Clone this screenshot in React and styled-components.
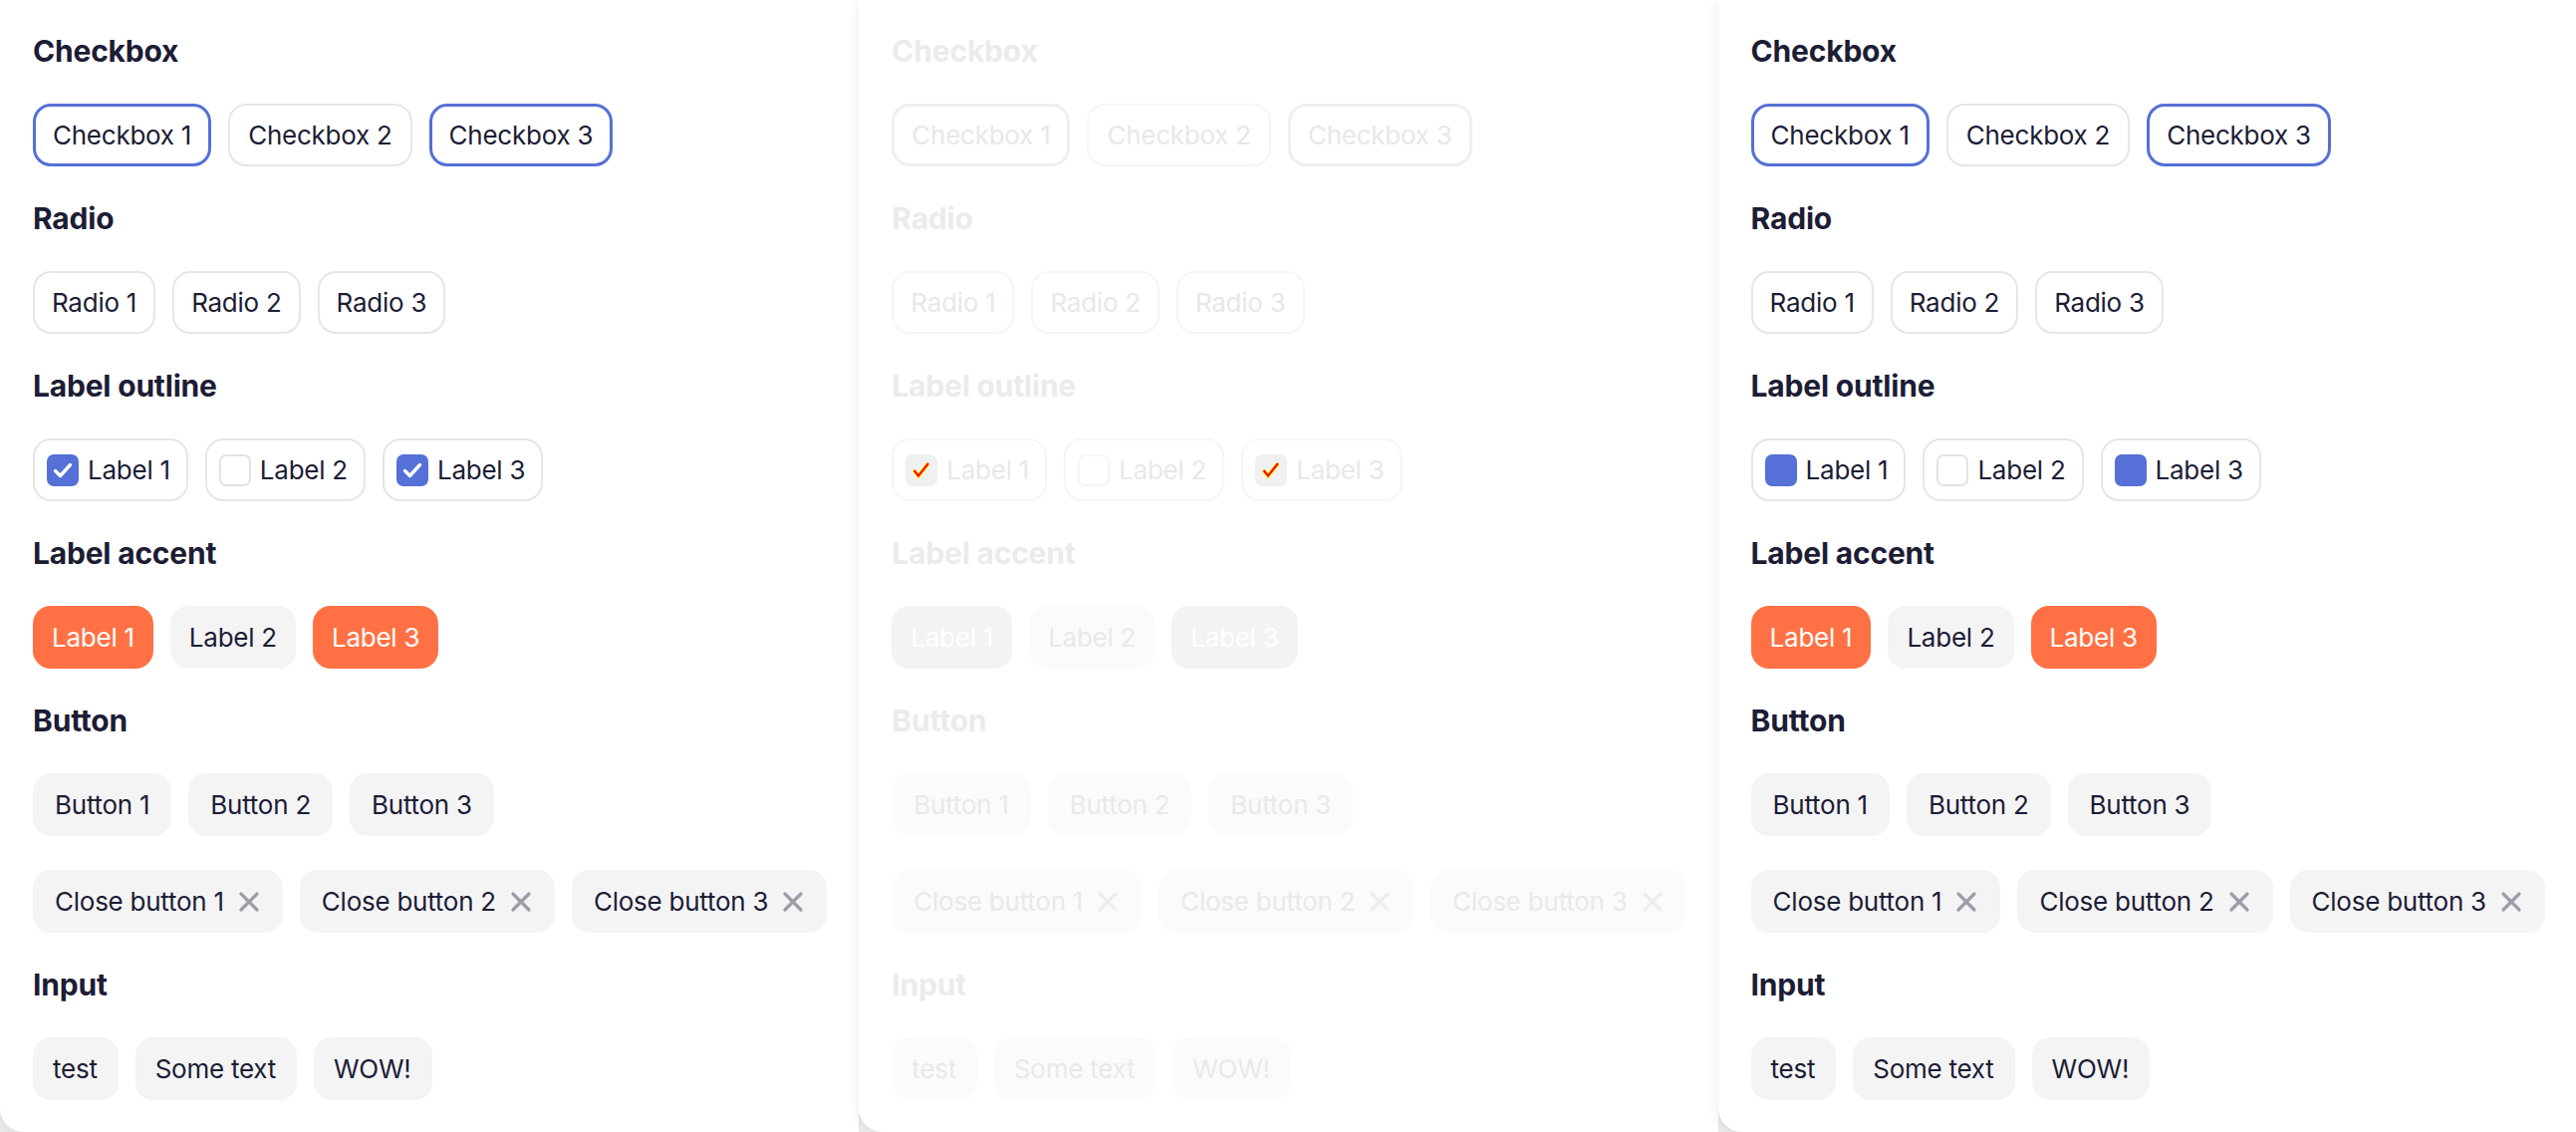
import React from 'react';
import styled, { createGlobalStyle, ThemeProvider } from 'styled-components';

const GlobalStyle = createGlobalStyle`
  html, body {
    margin: 0;
    padding: 0;
    background: #ebebeb;
  }
  body {
    font-family: Inter, "Noto Sans", sans-serif;
  }
`;

const normalTheme = {
  heading: '#1c1d35',
  text: '#1c1d35',
  border: '#e6e6e6',
  selected: '#5570d6',
  accent: '#ff7144',
  accentText: '#ffffff',
  muted: '#f4f4f5',
  mutedText: '#1c1d35',
  icon: '#9d9ca8',
  boxFill: '#5570d6',
  boxBorder: '#e3e3e3',
};

const disabledTheme = {
  heading: '#ebebeb',
  text: '#e8e8e8',
  border: '#f6f6f6',
  selected: '#efefef',
  accent: '#f3f3f3',
  accentText: '#ffffff',
  muted: '#fbfbfb',
  mutedText: '#e9e9e9',
  icon: '#ededed',
  boxFill: '#f0f0f0',
  boxBorder: '#f6f6f6',
};

const Board = styled.div`
  display: flex;
  width: 2586px;
  height: 1136px;
  overflow: hidden;
`;

const Panel = styled.section`
  position: relative;
  flex: 0 0 862px;
  box-sizing: border-box;
  height: 1136px;
  padding: 33px 32px 32px 33px;
  background: #ffffff;
  border-bottom-left-radius: 24px;
  box-shadow: -3px 2px 10px rgba(0, 0, 0, 0.05);
  display: flex;
  flex-direction: column;
  gap: 34px;
`;

const Heading = styled.h2`
  margin: 0;
  font-size: 30px;
  line-height: 37px;
  font-weight: 700;
  letter-spacing: -0.2px;
  color: ${(p) => p.theme.heading};
`;

const Row = styled.div`
  display: flex;
  gap: 17px;
`;

const Chip = styled.span`
  box-sizing: border-box;
  display: inline-flex;
  align-items: center;
  height: 63px;
  padding: 0 18px;
  border: 2px solid transparent;
  border-radius: 18px;
  font-size: 26px;
  line-height: 39px;
  letter-spacing: -0.25px;
  color: ${(p) => p.theme.text};
  white-space: nowrap;
`;

const ToggleChip = styled(Chip)`
  border-color: ${(p) => (p.$selected ? p.theme.selected : p.theme.border)};
  border-width: ${(p) => (p.$selected ? '3px' : '2px')};
  padding: 0 ${(p) => p.$pad - (p.$selected ? 1 : 0)}px;
`;

const OutlineChip = styled(Chip)`
  border-color: ${(p) => p.theme.border};
  padding: 0 16px 0 12px;
  gap: 9px;
`;

const Box = styled.span`
  box-sizing: border-box;
  display: inline-flex;
  align-items: center;
  justify-content: center;
  width: 32px;
  height: 32px;
  border-radius: 7px;
  background: ${(p) => (p.$checked ? p.theme.boxFill : 'transparent')};
  border: 2px solid ${(p) => (p.$checked ? p.theme.boxFill : p.theme.boxBorder)};
`;

const AccentChip = styled(Chip)`
  padding: 0 17px;
  background: ${(p) => (p.$active ? p.theme.accent : p.theme.muted)};
  color: ${(p) => (p.$active ? p.theme.accentText : p.theme.mutedText)};
`;

const PlainButton = styled(Chip)`
  padding: 0 20px;
  background: ${(p) => p.theme.muted};
  color: ${(p) => p.theme.mutedText};
`;

const CloseChip = styled(PlainButton)`
  gap: 14px;
  padding: 0 21px 0 20px;
`;

const TextField = styled(Chip)`
  padding: 0 19px 0 18px;
  background: ${(p) => p.theme.muted};
  color: ${(p) => p.theme.mutedText};
`;

const IconColor = styled.span`
  display: inline-flex;
  color: ${(p) => p.theme.icon};
`;

const Mark = ({ kind }) => {
  if (kind === 'check') {
    return (
      <svg width="22" height="22" viewBox="0 0 22 22">
        <path d="M3.5 11.5 L8.5 16.5 L18.5 5.5" fill="none" stroke="#fff" strokeWidth="3.4" strokeLinecap="round" strokeLinejoin="round" />
      </svg>
    );
  }
  if (kind === 'native') {
    return (
      <svg width="22" height="22" viewBox="0 0 22 22">
        <path d="M3.5 11 L8 16.5 L18 4" fill="none" stroke="#ffff00" strokeWidth="4" />
        <path d="M3.5 11 L8 16.5 L18 4" fill="none" stroke="#ff0000" strokeWidth="2.2" />
      </svg>
    );
  }
  return null;
};

const CloseIcon = () => (
  <svg width="22" height="22" viewBox="0 0 22 22">
    <path d="M3 3 L19 19 M19 3 L3 19" stroke="currentColor" strokeWidth="3.2" strokeLinecap="round" />
  </svg>
);

const checkboxes = [
  { label: 'Checkbox 1', on: true },
  { label: 'Checkbox 2', on: false },
  { label: 'Checkbox 3', on: true },
];

const labels = [
  { label: 'Label 1', on: true },
  { label: 'Label 2', on: false },
  { label: 'Label 3', on: true },
];

const panels = [
  { theme: normalTheme, mark: 'check' },
  { theme: disabledTheme, mark: 'native' },
  { theme: normalTheme, mark: 'fill' },
];

const ControlsPanel = ({ mark }) => (
  <Panel>
    <Heading>Checkbox</Heading>
    <Row>
      {checkboxes.map((c) => (
        <ToggleChip key={c.label} $selected={c.on} $pad={18}>{c.label}</ToggleChip>
      ))}
    </Row>

    <Heading>Radio</Heading>
    <Row>
      {['Radio 1', 'Radio 2', 'Radio 3'].map((r) => (
        <ToggleChip key={r} $pad={17}>{r}</ToggleChip>
      ))}
    </Row>

    <Heading>Label outline</Heading>
    <Row>
      {labels.map((l) => (
        <OutlineChip key={l.label}>
          <Box $checked={l.on}>{l.on && <Mark kind={mark} />}</Box>
          {l.label}
        </OutlineChip>
      ))}
    </Row>

    <Heading>Label accent</Heading>
    <Row>
      {labels.map((l) => (
        <AccentChip key={l.label} $active={l.on}>{l.label}</AccentChip>
      ))}
    </Row>

    <Heading>Button</Heading>
    <Row>
      {['Button 1', 'Button 2', 'Button 3'].map((b) => (
        <PlainButton key={b}>{b}</PlainButton>
      ))}
    </Row>
    <Row>
      {['Close button 1', 'Close button 2', 'Close button 3'].map((b) => (
        <CloseChip key={b}>
          {b}
          <IconColor>
            <CloseIcon />
          </IconColor>
        </CloseChip>
      ))}
    </Row>

    <Heading>Input</Heading>
    <Row>
      {['test', 'Some text', 'WOW!'].map((t) => (
        <TextField key={t}>{t}</TextField>
      ))}
    </Row>
  </Panel>
);

export default function App() {
  return (
    <>
      <GlobalStyle />
      <Board>
        {panels.map((p, i) => (
          <ThemeProvider key={i} theme={p.theme}>
            <ControlsPanel mark={p.mark} />
          </ThemeProvider>
        ))}
      </Board>
    </>
  );
}
